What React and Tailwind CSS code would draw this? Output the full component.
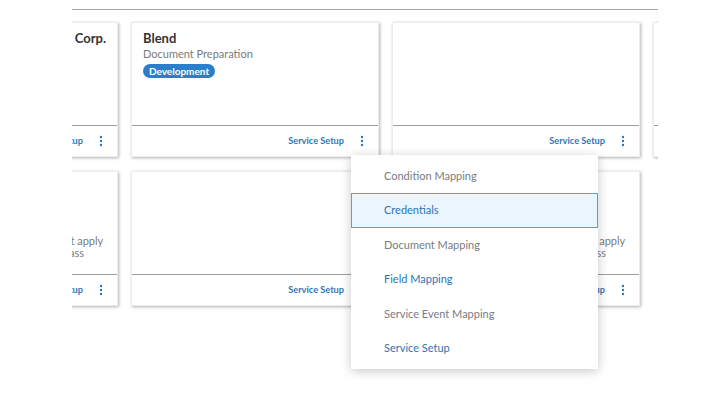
import React from 'react'

function Dots() {
  return (
    <svg width="4" height="12" viewBox="0 0 4 12" className="fill-[#2f76b8]">
      <circle cx="2" cy="2" r="1.2" />
      <circle cx="2" cy="6" r="1.2" />
      <circle cx="2" cy="10" r="1.2" />
    </svg>
  )
}

function Card({ title, subtitle, badge, note }) {
  return (
    <div className="flex h-[135px] w-[248px] flex-col border border-[#ececec] bg-white shadow-[1px_1px_3px_rgba(0,0,0,0.3)]">
      <div className="flex-1 px-[11px] pt-[6px]">
        {title && <div className="whitespace-nowrap text-[13px] font-bold leading-[18px] text-[#333]">{title}</div>}
        {subtitle && <div className="whitespace-nowrap text-[11px] leading-[14px] text-[#7a7a7a]">{subtitle}</div>}
        {badge && (
          <div className="mt-[3px] w-fit rounded-full bg-[#2b7ecb] px-[6px] text-[10px] font-bold leading-[14px] text-white">
            {badge}
          </div>
        )}
        {note && (
          <div className="mt-[57px] whitespace-nowrap text-[11px] leading-[12px] text-[#7a7a7a]">
            {note.map((l) => (
              <div key={l}>{l}</div>
            ))}
          </div>
        )}
      </div>
      <div className="flex h-[31px] items-center justify-end gap-[16px] border-t border-[#9c9c9c] pr-[14px]">
        <span className="text-[9.2px] font-bold text-[#2f76b8]">Service Setup</span>
        <Dots />
      </div>
    </div>
  )
}

const menu = [
  { label: 'Condition Mapping', blue: false },
  { label: 'Credentials', blue: true, active: true },
  { label: 'Document Mapping', blue: false },
  { label: 'Field Mapping', blue: true },
  { label: 'Service Event Mapping', blue: false },
  { label: 'Service Setup', blue: true },
]

const note = ['Rules for these document packages that apply', 'to loans on all programs marked as bypass']

export default function App() {
  return (
    <div className="relative h-[393px] w-[710px] overflow-hidden bg-white font-['Lato',sans-serif]">
      <div className="ml-[72px] w-[586px] pt-[9px]">
        <div className="border-t border-[#a5a5a5]" />
        <div className="overflow-hidden pb-4">
          <div className="-ml-[202px] mt-[12px] grid grid-cols-[repeat(4,248px)] gap-x-[13px] gap-y-[14px]">
            <Card title="Mortgage Documents & Services Corp." />
            <Card title="Blend" subtitle="Document Preparation" badge="Development" />
            <Card />
            <Card />
            <Card note={note} />
            <Card />
            <Card note={note} />
          </div>
        </div>
      </div>

      <div className="absolute left-[351px] top-[155px] w-[247px] bg-white py-[4px] shadow-[0_2px_10px_rgba(0,0,0,0.22)]">
        {menu.map((m) => (
          <div
            key={m.label}
            className={`flex h-[34.4px] items-center pl-[32px] text-[11px] ${
              m.active ? 'border border-[#4ea3e8] bg-[#eaf5fe]' : 'border border-transparent'
            } ${m.blue ? 'text-[#2c74b5]' : 'text-[#777c84]'}`}
          >
            {m.label}
          </div>
        ))}
      </div>
    </div>
  )
}
